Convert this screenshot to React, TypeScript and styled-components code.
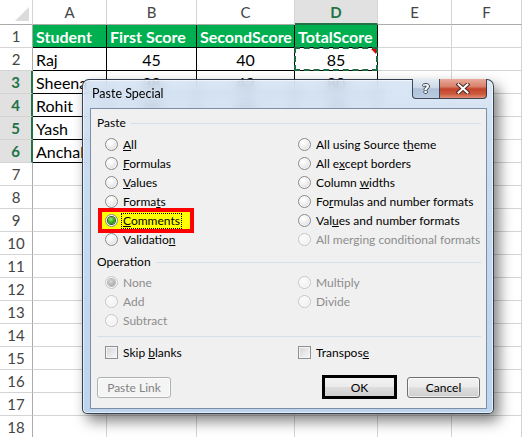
import React from "react";
import styled, { createGlobalStyle, css } from "styled-components";

const GlobalStyle = createGlobalStyle`
  html, body { margin: 0; padding: 0; background: #fff; }
  body { width: 522px; height: 437px; overflow: hidden; }
  #root { position: relative; width: 522px; height: 437px; overflow: hidden; }
  *, *::before, *::after { box-sizing: border-box; }
`;

/* ---------- worksheet ---------- */

const Sheet = styled.div`
  display: grid;
  grid-template-columns: 33px 74px 90px 98px 83px 74px 70px;
  grid-template-rows: 25px repeat(18, 23px);
  font-family: Lato, "Liberation Sans", sans-serif;
  font-size: 16px;
  color: #000;
`;

const Corner = styled.div`
  position: relative;
  border-right: 1px solid #d4d4d4;
  border-bottom: 1px solid #ababab;
  &::after {
    content: "";
    position: absolute;
    right: 3px;
    bottom: 3px;
    border-style: solid;
    border-width: 0 0 14px 14px;
    border-color: transparent transparent #dcdcdc transparent;
  }
`;

const ColHead = styled.div<{ $active?: boolean }>`
  display: flex;
  align-items: center;
  justify-content: center;
  font-size: 15px;
  color: #444;
  border-right: 1px solid #d4d4d4;
  border-bottom: 1px solid #ababab;
  ${(p) =>
    p.$active &&
    css`
      background: #e1e1e1;
      color: #217346;
      font-weight: 700;
      border-bottom: 2px solid #217346;
    `}
`;

const RowHead = styled.div<{ $active?: boolean }>`
  display: flex;
  align-items: center;
  justify-content: center;
  font-size: 15px;
  color: #444;
  border-right: 1px solid #ababab;
  border-bottom: 1px solid #d4d4d4;
  ${(p) =>
    p.$active &&
    css`
      background: #e1e1e1;
      color: #217346;
      font-weight: 700;
      border-right: 2px solid #217346;
    `}
`;

const Cell = styled.div<{
  $edge?: boolean;
  $head?: boolean;
  $center?: boolean;
  $ants?: boolean;
}>`
  position: relative;
  display: flex;
  align-items: center;
  justify-content: ${(p) => (p.$center ? "center" : "flex-start")};
  padding: 0 3px;
  white-space: nowrap;
  border-right: 1px solid ${(p) => (p.$edge ? "#000" : "#d4d4d4")};
  border-bottom: 1px solid ${(p) => (p.$edge ? "#000" : "#d4d4d4")};
  ${(p) =>
    p.$head &&
    css`
      background: #00b050;
      color: #fff;
      font-weight: 700;
    `}
  ${(p) =>
    p.$ants &&
    css`
      &::after {
        content: "";
        position: absolute;
        inset: -1px -1px -1px -1px;
        border: 2px dashed #1e6b41;
      }
      &::before {
        content: "";
        position: absolute;
        top: 1px;
        right: 1px;
        border-style: solid;
        border-width: 0 5px 5px 0;
        border-color: transparent #e00000 transparent transparent;
        z-index: 1;
      }
    `}
`;

const COLS = ["A", "B", "C", "D", "E", "F"];
const TABLE = [
  ["Student", "First Score", "SecondScore", "TotalScore"],
  ["Raj", "45", "40", "85"],
  ["Sheena", "38", "42", "80"],
  ["Rohit", "40", "35", "75"],
  ["Yash", "48", "45", "93"],
  ["Anchal", "42", "44", "86"],
];

function Worksheet() {
  const cells: React.ReactNode[] = [<Corner key="corner" />];
  COLS.forEach((c) =>
    cells.push(
      <ColHead key={`h${c}`} $active={c === "D"}>
        {c}
      </ColHead>
    )
  );
  for (let r = 1; r <= 18; r++) {
    cells.push(
      <RowHead key={`r${r}`} $active={r >= 3 && r <= 6}>
        {r}
      </RowHead>
    );
    for (let c = 0; c < COLS.length; c++) {
      const row = TABLE[r - 1];
      const inTable = !!row && c < 4;
      cells.push(
        <Cell
          key={`c${r}-${c}`}
          $edge={inTable}
          $head={r === 1 && c < 4}
          $center={inTable && c > 0 && r > 1}
          $ants={r === 2 && c === 3}
        >
          {inTable ? row[c] : null}
        </Cell>
      );
    }
  }
  return <Sheet>{cells}</Sheet>;
}

/* ---------- Paste Special dialog ---------- */

const Window = styled.div`
  position: absolute;
  left: 82px;
  top: 79px;
  width: 412px;
  height: 335px;
  display: flex;
  flex-direction: column;
  border: 1px solid rgba(28, 38, 52, 0.85);
  border-radius: 7px 7px 5px 5px;
  background: linear-gradient(
    180deg,
    rgba(208, 224, 242, 0.78) 0%,
    rgba(190, 213, 238, 0.84) 30%,
    rgba(180, 207, 236, 0.9) 100%
  );
  backdrop-filter: blur(6px);
  box-shadow: inset 0 0 0 1px rgba(255, 255, 255, 0.6),
    5px 7px 14px rgba(0, 0, 0, 0.5);
  font-family: Lato, "Open Sans", sans-serif;
  font-size: 12px;
  color: #000;
`;

const TitleBar = styled.div`
  height: 28px;
  display: flex;
  justify-content: space-between;
  align-items: flex-start;
  flex: none;
`;

const Title = styled.div`
  margin: 6px 0 0 9px;
  line-height: 16px;
  font-size: 12.5px;
  color: #000;
`;

const CaptionGroup = styled.div`
  display: flex;
  margin: -1px 6px 0 0;
`;

const CaptionButton = styled.div<{ $close?: boolean }>`
  height: 20px;
  display: flex;
  align-items: center;
  justify-content: center;
  border: 1px solid rgba(40, 48, 62, 0.85);
  border-top: none;
  ${(p) =>
    p.$close
      ? css`
          width: 47px;
          border-left: none;
          border-radius: 0 0 4px 0;
          background: linear-gradient(
            180deg,
            #e9ab9c 0%,
            #d8806a 40%,
            #c5432a 52%,
            #cc5a3e 80%,
            #e0907a 100%
          );
        `
      : css`
          width: 28px;
          border-radius: 0 0 0 4px;
          background: linear-gradient(
            180deg,
            #e4ecf5 0%,
            #ccd9e7 45%,
            #afc2d8 52%,
            #bccde0 100%
          );
        `}
`;

const HelpGlyph = styled.span`
  font-family: "DejaVu Sans", sans-serif;
  font-weight: 700;
  font-size: 13px;
  line-height: 1;
  color: #fff;
  text-shadow: -1px 0 #3f4a58, 1px 0 #3f4a58, 0 -1px #3f4a58, 0 1px #3f4a58;
`;

const Client = styled.div`
  flex: 1;
  margin: 0 6px 4px 7px;
  border: 1px solid #7d8fa4;
  background: #f0f0f0;
  display: flex;
  flex-direction: column;
  padding: 6px 0 8px;
`;

const GroupHeader = styled.div<{ $gap: number }>`
  display: flex;
  align-items: center;
  gap: 5px;
  height: 16px;
  margin: ${(p) => p.$gap}px 5px 0 6px;
  line-height: 16px;
  &::after {
    content: "";
    flex: 1;
    height: 1px;
    background: #d5dfe5;
  }
`;

const OptionGrid = styled.div<{ $rows: number; $gap: number }>`
  display: grid;
  grid-template-columns: 193px 1fr;
  grid-template-rows: ${(p) => `repeat(${p.$rows}, 19px)`};
  grid-auto-flow: column;
  margin-top: ${(p) => p.$gap}px;
  padding-left: 14px;
`;

const Option = styled.div<{ $disabled?: boolean; $marked?: boolean }>`
  position: relative;
  display: flex;
  align-items: center;
  gap: 5px;
  color: ${(p) => (p.$disabled ? "#8d8d8d" : "#000")};
  white-space: nowrap;
  ${(p) =>
    p.$marked &&
    css`
      &::before {
        content: "";
        position: absolute;
        left: -7px;
        top: -3px;
        width: 96px;
        height: 25px;
        border: 4px solid #ff0000;
        background: #ffff00;
      }
    `}
`;

const Radio = styled.span<{ $checked?: boolean; $disabled?: boolean }>`
  position: relative;
  flex: none;
  width: 13px;
  height: 13px;
  border-radius: 50%;
  border: 1px solid ${(p) => (p.$disabled ? "#c6c6c6" : "#8a8a8a")};
  background: ${(p) =>
    p.$disabled
      ? "radial-gradient(circle at 40% 35%, #fbfbfb, #ececec)"
      : "radial-gradient(circle at 40% 35%, #ffffff 10%, #d6d6d6 90%)"};
  box-shadow: inset 0 0 0 1px rgba(255, 255, 255, 0.7);
  ${(p) =>
    p.$checked &&
    css`
      &::after {
        content: "";
        position: absolute;
        left: 2px;
        top: 2px;
        width: 7px;
        height: 7px;
        border-radius: 50%;
        background: ${p.$disabled
          ? "radial-gradient(circle at 40% 35%, #d8d8d8, #9a9a9a)"
          : "radial-gradient(circle at 40% 35%, #a6ee7e 0%, #3fae22 45%, #17650c 100%)"};
        box-shadow: 0 0 0 1px ${p.$disabled ? "#b5b5b5" : "#2b5a22"};
      }
    `}
`;

const Check = styled.span`
  flex: none;
  width: 13px;
  height: 13px;
  border: 1px solid #8f8f8f;
  background: linear-gradient(135deg, #d2d5da 0%, #f7f7f7 100%);
  box-shadow: inset 0 0 0 1px #f4f4f4;
`;

const Text = styled.span<{ $focus?: boolean }>`
  position: relative;
  line-height: 14px;
  ${(p) =>
    p.$focus &&
    css`
      border: 1px dotted #000;
      padding: 0 1px;
      margin-left: -2px;
    `}
`;

const Separator = styled.div`
  height: 1px;
  margin: 6px 5px 0 6px;
  background: #d5dfe5;
`;

const CheckRow = styled.div`
  display: grid;
  grid-template-columns: 193px 1fr;
  height: 19px;
  margin-top: 6px;
  padding-left: 14px;
`;

const ButtonRow = styled.div`
  display: flex;
  align-items: center;
  height: 24px;
  margin-top: 13px;
  padding: 0 6px;
  gap: 10px;
`;

const Spacer = styled.div`
  flex: 1;
`;

const Button = styled.div<{ $disabled?: boolean; $marked?: boolean; $w: number }>`
  width: ${(p) => p.$w}px;
  height: 21px;
  display: flex;
  align-items: center;
  justify-content: center;
  border-radius: 3px;
  border: 1px solid ${(p) => (p.$disabled ? "#adb2b5" : "#707070")};
  color: ${(p) => (p.$disabled ? "#838383" : "#000")};
  background: ${(p) =>
    p.$disabled
      ? "#f4f4f4"
      : "linear-gradient(180deg, #f2f2f2 0%, #ebebeb 48%, #dddddd 52%, #cfcfcf 100%)"};
  box-shadow: inset 0 0 0 1px rgba(255, 255, 255, 0.6);
  ${(p) =>
    p.$marked &&
    css`
      height: 24px;
      border-radius: 0;
      border: 3px solid #000;
      box-shadow: none;
    `}
`;

type Choice = {
  label: string;
  u?: number;
  checked?: boolean;
  disabled?: boolean;
  marked?: boolean;
};

const PASTE: Choice[] = [
  { label: "All", u: 0 },
  { label: "Formulas", u: 0 },
  { label: "Values", u: 0 },
  { label: "Formats", u: 5 },
  { label: "Comments", u: 0, checked: true, marked: true },
  { label: "Validation", u: 9 },
  { label: "All using Source theme", u: 18 },
  { label: "All except borders", u: 5 },
  { label: "Column widths", u: 7 },
  { label: "Formulas and number formats", u: 2 },
  { label: "Values and number formats", u: 3 },
  { label: "All merging conditional formats", disabled: true },
];

const OPERATION: Choice[] = [
  { label: "None", checked: true, disabled: true },
  { label: "Add", disabled: true },
  { label: "Subtract", disabled: true },
  { label: "Multiply", disabled: true },
  { label: "Divide", disabled: true },
];

function Mnemonic({ label, u }: { label: string; u?: number }) {
  if (u === undefined) return <>{label}</>;
  return (
    <>
      {label.slice(0, u)}
      <u>{label[u]}</u>
      {label.slice(u + 1)}
    </>
  );
}

function RadioOption({ c }: { c: Choice }) {
  return (
    <Option $disabled={c.disabled} $marked={c.marked}>
      <Radio $checked={c.checked} $disabled={c.disabled} />
      <Text $focus={c.marked}>
        <Mnemonic label={c.label} u={c.u} />
      </Text>
    </Option>
  );
}

function CloseGlyph() {
  return (
    <svg width="14" height="11" viewBox="0 0 14 11">
      <path d="M2.5 1.5 L11.5 9.5 M11.5 1.5 L2.5 9.5" stroke="#4a2a24" strokeWidth="4" strokeLinecap="square" />
      <path d="M2.5 1.5 L11.5 9.5 M11.5 1.5 L2.5 9.5" stroke="#ffffff" strokeWidth="2" strokeLinecap="square" />
    </svg>
  );
}

function PasteSpecial() {
  return (
    <Window>
      <TitleBar>
        <Title>Paste Special</Title>
        <CaptionGroup>
          <CaptionButton>
            <HelpGlyph>?</HelpGlyph>
          </CaptionButton>
          <CaptionButton $close>
            <CloseGlyph />
          </CaptionButton>
        </CaptionGroup>
      </TitleBar>
      <Client>
        <GroupHeader $gap={0}>Paste</GroupHeader>
        <OptionGrid $rows={6} $gap={4}>
          {PASTE.map((c) => (
            <RadioOption key={c.label} c={c} />
          ))}
        </OptionGrid>
        <GroupHeader $gap={5}>Operation</GroupHeader>
        <OptionGrid $rows={3} $gap={3}>
          {OPERATION.map((c) => (
            <RadioOption key={c.label} c={c} />
          ))}
        </OptionGrid>
        <Separator />
        <CheckRow>
          <Option>
            <Check />
            <Text>
              <Mnemonic label="Skip blanks" u={5} />
            </Text>
          </Option>
          <Option>
            <Check />
            <Text>
              <Mnemonic label="Transpose" u={8} />
            </Text>
          </Option>
        </CheckRow>
        <ButtonRow>
          <Button $disabled $w={74}>
            Paste Link
          </Button>
          <Spacer />
          <Button $marked $w={75}>
            OK
          </Button>
          <Button $w={73}>Cancel</Button>
        </ButtonRow>
      </Client>
    </Window>
  );
}

export default function App() {
  return (
    <>
      <GlobalStyle />
      <Worksheet />
      <PasteSpecial />
    </>
  );
}
